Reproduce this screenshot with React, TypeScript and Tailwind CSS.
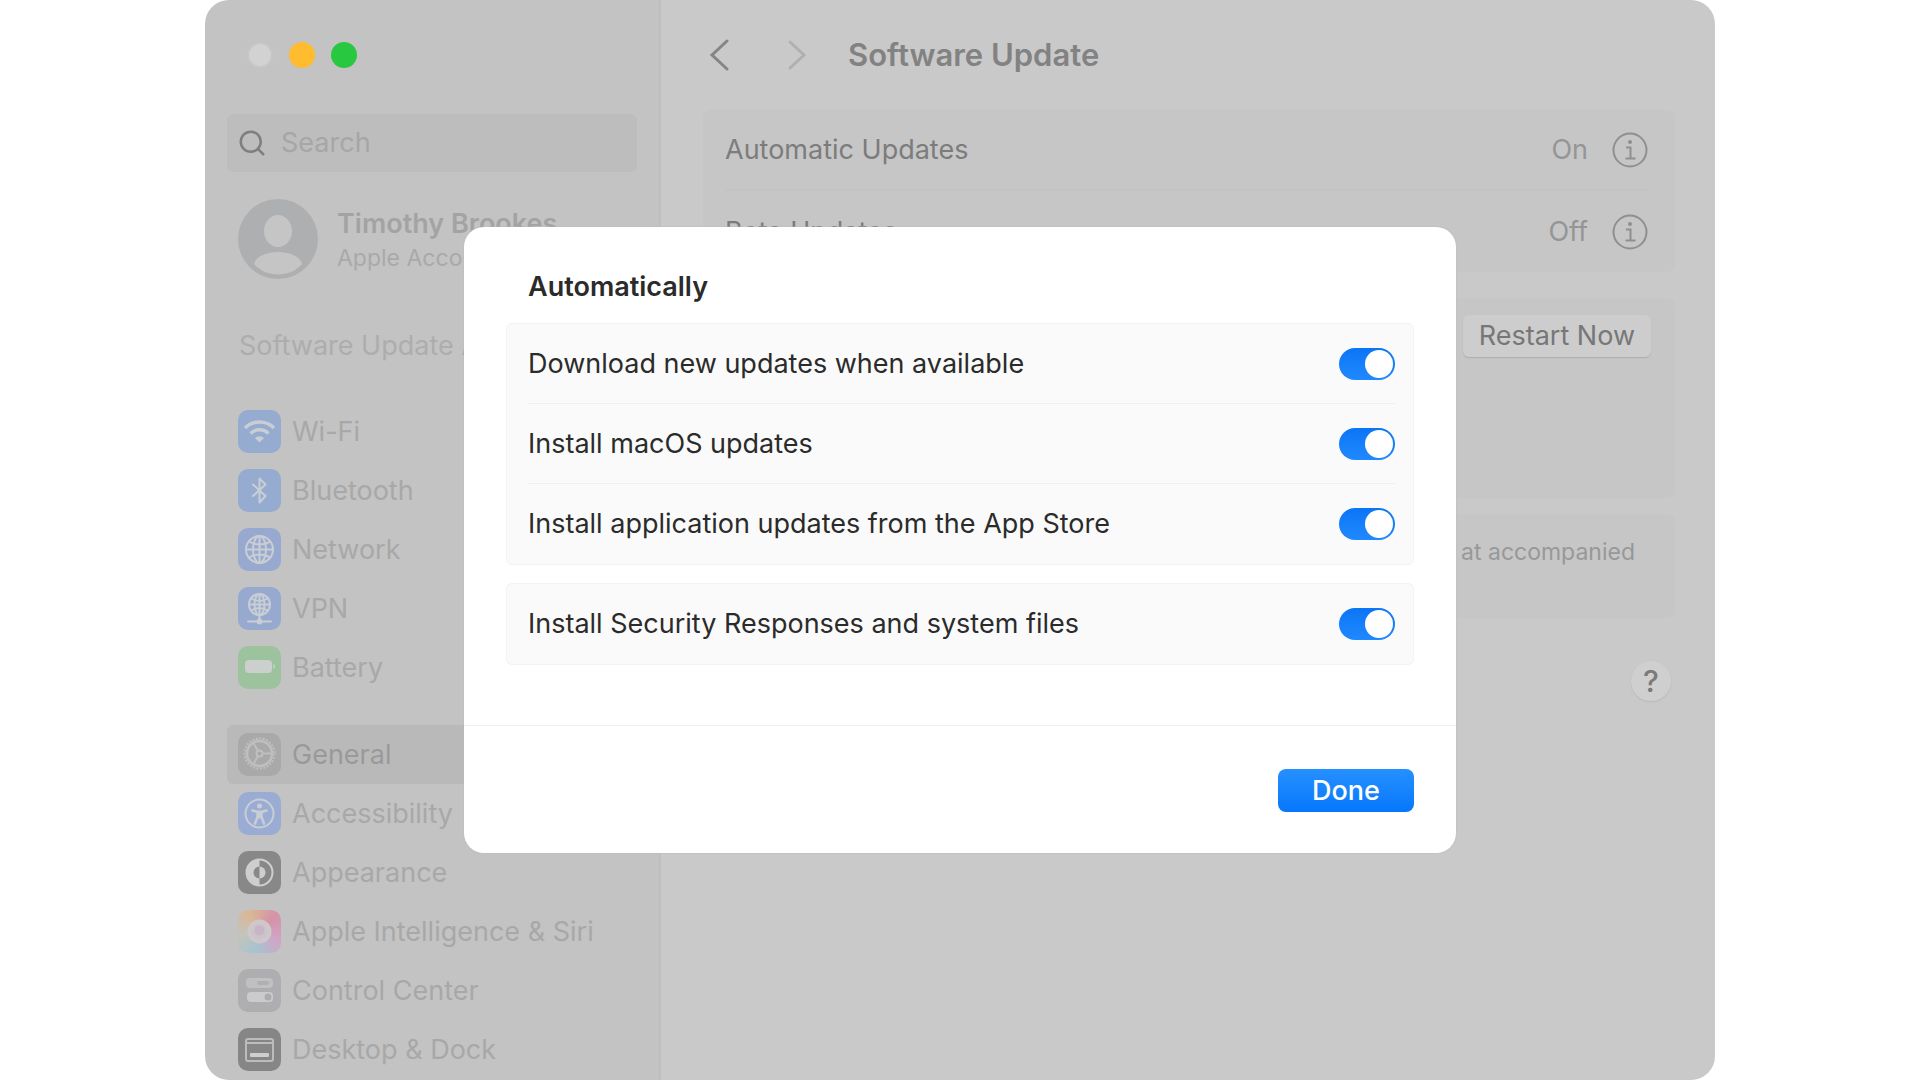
import { useId, useState } from "react";
import type { ReactNode } from "react";
import { Search } from "lucide-react";

type NavItem = { label: string; tile: string; icon: ReactNode };

const line = {
  fill: "none",
  stroke: "#c9ced4",
  strokeWidth: 2,
  strokeLinecap: "round" as const,
  strokeLinejoin: "round" as const,
};

const WifiIcon = (
  <svg viewBox="0 0 43 43" className="size-full">
    <g {...line} strokeWidth={3.5} strokeLinecap="butt">
      <path d="M7 18a20.500 20.500 0 0 1 29 0" />
      <path d="M12.500 23.500a12.800 12.800 0 0 1 18 0" />
    </g>
    <path d="M21.500 32.500l-4.500-4.500a6.400 6.400 0 0 1 9 0z" fill="#c9ced4" />
  </svg>
);

const BluetoothIcon = (
  <svg viewBox="0 0 43 43" className="size-full">
    <path {...line} d="M15 15.500l12.500 11.500-6 6.500v-24l6 6-12.500 11.500" />
  </svg>
);

const NetworkIcon = (
  <svg viewBox="0 0 43 43" className="size-full">
    <g {...line}>
      <circle cx="21.500" cy="21.500" r="13.500" />
      <ellipse cx="21.500" cy="21.500" rx="6.500" ry="13.500" />
      <path d="M21.500 8v27M8 21.500h27M11 13.500c6 4 15 4 21 0M11 29.500c6-4 15-4 21 0" />
    </g>
  </svg>
);

const VpnIcon = (
  <svg viewBox="0 0 43 43" className="size-full">
    <g {...line}>
      <circle cx="21.500" cy="17.500" r="10.500" />
      <ellipse cx="21.500" cy="17.500" rx="5" ry="10.500" />
      <path d="M21.500 7v21M11 17.500h21M13.500 11.500c5 3 11 3 16 0M13.500 23.500c5-3 11-3 16 0" />
      <path d="M21.500 28v5M10 34.500h8M25 34.500h8" />
    </g>
    <circle cx="21.500" cy="34.500" r="3" fill="#c9ced4" />
  </svg>
);

const BatteryIcon = (
  <svg viewBox="0 0 43 43" className="size-full">
    <rect x="7" y="14" width="27" height="13" rx="4" fill="#ccd0cc" />
    <path d="M35.500 18v5c2-.5 2-4.500 0-5z" fill="#ccd0cc" />
  </svg>
);

const GeneralIcon = (
  <svg viewBox="0 0 43 43" className="size-full">
    <g fill="none" stroke="#bfbfbf" strokeWidth="2">
      <circle cx="21.500" cy="20.500" r="15" strokeDasharray="2 1.500" />
      <circle cx="21.500" cy="20.500" r="12.500" strokeWidth="2.500" />
      <circle cx="21.500" cy="20.500" r="3" />
      <path d="M24.500 20.500h9M20 18l-4.500-8M20 23l-4.500 8" />
    </g>
  </svg>
);

const AccessibilityIcon = (
  <svg viewBox="0 0 43 43" className="size-full">
    <circle cx="21.500" cy="21.500" r="14" {...line} />
    <circle cx="21.500" cy="14" r="2.500" fill="#c9ced4" />
    <path {...line} strokeWidth={2.5} d="M14.500 18.500l5 1.500v5l-2.500 6.500M28.500 18.500l-5 1.500v5l2.500 6.500" />
    <path d="M19.500 18.500h4v8h-4z" fill="#c9ced4" />
  </svg>
);

const AppearanceIcon = (
  <svg viewBox="0 0 43 43" className="size-full">
    <circle cx="21.500" cy="21.500" r="13" fill="none" stroke="#cecece" strokeWidth="2" />
    <path d="M21.500 8.500a13 13 0 0 0 0 26v-7a6 6 0 0 1 0-12z" fill="#cecece" />
    <path d="M21.500 15.500a6 6 0 0 1 0 12z" fill="#cecece" />
  </svg>
);

const SiriIcon = (
  <svg viewBox="0 0 43 43" className="size-full">
    <circle cx="21.500" cy="21.500" r="10" fill="#cdc3cb" stroke="#cfc8cb" strokeWidth="4" />
    <circle cx="21.500" cy="20.500" r="5" fill="#c8b6c6" />
  </svg>
);

const ControlCenterIcon = (
  <svg viewBox="0 0 43 43" className="size-full">
    <rect x="8" y="9" width="27" height="10" rx="4" fill="#c0c0c2" />
    <rect x="19" y="12" width="12" height="4" rx="2" fill="#b0b0b3" />
    <rect x="9" y="23" width="26" height="10" rx="4" fill="#cbcbcd" />
    <circle cx="30" cy="28" r="3.500" fill="#acacaf" />
  </svg>
);

const DockIcon = (
  <svg viewBox="0 0 43 43" className="size-full">
    <rect x="8" y="11" width="27" height="22" rx="2" fill="none" stroke="#bcbcbc" strokeWidth="2" />
    <path d="M9 15h25" stroke="#bcbcbc" strokeWidth="2" />
    <rect x="12" y="25" width="19" height="4" rx="1" fill="#cecece" />
  </svg>
);

const CONNECTIVITY: NavItem[] = [
  { label: "Wi-Fi", tile: "bg-[#96abd0]", icon: WifiIcon },
  { label: "Bluetooth", tile: "bg-[#96abd0]", icon: BluetoothIcon },
  { label: "Network", tile: "bg-[#98a9d0]", icon: NetworkIcon },
  { label: "VPN", tile: "bg-[#98a9d0]", icon: VpnIcon },
  { label: "Battery", tile: "bg-[#9cc39e]", icon: BatteryIcon },
];

const SYSTEM: NavItem[] = [
  { label: "General", tile: "bg-[#a9a9a9]", icon: GeneralIcon },
  { label: "Accessibility", tile: "bg-[#9aacd3]", icon: AccessibilityIcon },
  { label: "Appearance", tile: "bg-[#888888]", icon: AppearanceIcon },
  {
    label: "Apple Intelligence & Siri",
    tile: "bg-[conic-gradient(from_45deg,#d592a8,#d0a6c6,#a6c3cf,#c4c4bb,#d9b795,#d592a8)]",
    icon: SiriIcon,
  },
  { label: "Control Center", tile: "bg-[#aeaeb1]", icon: ControlCenterIcon },
  { label: "Desktop & Dock", tile: "bg-[#868686]", icon: DockIcon },
];

const UPDATE_OPTIONS = [
  "Download new updates when available",
  "Install macOS updates",
  "Install application updates from the App Store",
];

const SECURITY_OPTIONS = ["Install Security Responses and system files"];

function NavList({ items, selected }: { items: NavItem[]; selected?: string }) {
  return (
    <ul>
      {items.map((item) => (
        <li key={item.label}>
          <a
            href="#"
            className={`flex h-[59px] items-center gap-[11px] rounded-md px-[11px] ${
              item.label === selected ? "bg-[#b9b9b9] text-[#999999]" : "text-[#a8a8a8]"
            }`}
          >
            <span className={`size-[43px] shrink-0 overflow-hidden rounded-[10px] ${item.tile}`}>{item.icon}</span>
            <span className="whitespace-nowrap">{item.label}</span>
          </a>
        </li>
      ))}
    </ul>
  );
}

function Sidebar() {
  return (
    <aside className="w-[456px] shrink-0 border-r-2 border-[#bfbfbf] bg-[#c3c3c3] px-[22px] text-[27px] leading-8">
      <div className="flex h-[114px] items-start gap-4 pt-[42px] pl-5">
        <button aria-label="Close" className="size-[26px] rounded-full border-2 border-[#c6c6c6] bg-[#d2d2d2]" />
        <button aria-label="Minimize" className="size-[26px] rounded-full bg-[#febc2e]" />
        <button aria-label="Zoom" className="size-[26px] rounded-full bg-[#28c840]" />
      </div>

      <label className="flex h-[58px] items-center gap-[14px] rounded-md bg-[#bdbdbd] px-[10px]">
        <Search className="size-[30px] shrink-0 text-[#7f7f7f]" strokeWidth={2} />
        <input
          type="search"
          aria-label="Search"
          placeholder="Search"
          className="w-full bg-transparent outline-none placeholder:text-[#a6a6a6]"
        />
      </label>

      <a href="#" className="mt-[27px] flex items-center gap-[19px] px-[11px]">
        <svg viewBox="0 0 80 80" className="size-20 shrink-0">
          <circle cx="40" cy="40" r="40" fill="#aeafb1" />
          <ellipse cx="40" cy="32" rx="14" ry="16" fill="#c5c5c6" />
          <path d="M16 65c4-16 44-16 48 0-12 14-36 14-48 0z" fill="#c5c5c6" />
        </svg>
        <span className="pt-1 leading-[34px] whitespace-nowrap">
          <span className="block font-semibold text-[#a3a3a3]">Timothy Brookes</span>
          <span className="block text-[23px] text-[#a9a9a9]">Apple Account</span>
        </span>
      </a>

      <a href="#" className="mt-[51px] block px-3 whitespace-nowrap text-[#adadad]">
        Software Update Available
      </a>

      <nav className="mt-10 flex flex-col gap-7">
        <NavList items={CONNECTIVITY} />
        <NavList items={SYSTEM} selected="General" />
      </nav>
    </aside>
  );
}

function InfoButton({ label }: { label: string }) {
  return (
    <button aria-label={label} className="size-9">
      <svg viewBox="0 0 36 36" className="size-full" fill="none" stroke="#8f8f8f">
        <circle cx="18" cy="18" r="16.500" strokeWidth="2" />
        <path d="M14 15.500h4.500v11M13.500 26.500h10" strokeWidth="2" />
        <circle cx="18" cy="10" r="2" fill="#8f8f8f" stroke="none" />
      </svg>
    </button>
  );
}

function StatusRow({ label, value }: { label: string; value: string }) {
  return (
    <div className="flex h-[81px] items-center">
      <span className="flex-1 text-[#7c7c7c]">{label}</span>
      <span className="mr-6 text-[#959595]">{value}</span>
      <InfoButton label={`${label} info`} />
    </div>
  );
}

function MainPane() {
  return (
    <main className="flex-1 bg-[#c9c9c9] pr-10 pl-[42px] text-[27px] leading-8">
      <header className="flex h-[110px] items-center">
        <button aria-label="Back" className="ml-[5px]">
          <svg viewBox="0 0 24 32" className="h-8 w-6" fill="none" stroke="#858585" strokeWidth="3" strokeLinecap="round">
            <path d="M19 2L4 16l15 14" />
          </svg>
        </button>
        <button aria-label="Forward" className="ml-[54px]">
          <svg viewBox="0 0 24 32" className="h-8 w-6" fill="none" stroke="#b0b0b0" strokeWidth="3" strokeLinecap="round">
            <path d="M4 3l14 13L4 29" />
          </svg>
        </button>
        <h1 className="ml-[38px] text-[31px] font-semibold text-[#828282]">Software Update</h1>
      </header>

      <section className="divide-y-2 divide-[#c3c3c3] rounded-lg bg-[#c6c6c6] pr-[27px] pl-[22px]">
        <StatusRow label="Automatic Updates" value="On" />
        <StatusRow label="Beta Updates" value="Off" />
      </section>

      <section className="mt-[26px] flex h-[200px] items-start justify-end rounded-lg bg-[#c6c6c6] pt-[17px] pr-6">
        <button className="h-[42px] rounded-md bg-[#cdcdcd] px-4 text-[#777777] shadow-[0_1px_1px_#adadad]">
          Restart Now
        </button>
      </section>

      <section className="mt-4 flex h-[104px] items-start justify-end rounded-lg bg-[#c6c6c6] pt-[22px] pr-10">
        <p className="text-[23px] text-[#989898]">at accompanied</p>
      </section>

      <div className="mt-[43px] flex justify-end">
        <button
          aria-label="Help"
          className="mr-1 size-10 rounded-full bg-[#cfcfcf] text-[30px] font-medium text-[#7a7a7a] shadow-[0_1px_2px_#b8b8b8]"
        >
          ?
        </button>
      </div>
    </main>
  );
}

function ToggleRow({ label }: { label: string }) {
  const id = useId();
  const [on, setOn] = useState(true);

  return (
    <div className="flex h-20 items-center justify-between">
      <label htmlFor={id}>{label}</label>
      <input
        id={id}
        type="checkbox"
        role="switch"
        checked={on}
        onChange={(e) => setOn(e.target.checked)}
        className="flex h-8 w-14 appearance-none items-center rounded-full bg-[#d5d5d5] p-[2px] before:size-7 before:rounded-full before:bg-white checked:justify-end checked:bg-linear-to-b checked:from-[#0a75f5] checked:to-[#2089ff]"
      />
    </div>
  );
}

function OptionGroup({ options }: { options: string[] }) {
  return (
    <div className="divide-y divide-[#efefef] rounded-md border border-[#f3f3f3] bg-[#fafafa] pr-[18px] pl-[21px]">
      {options.map((label) => (
        <ToggleRow key={label} label={label} />
      ))}
    </div>
  );
}

function UpdatesDialog() {
  return (
    <div
      role="dialog"
      aria-labelledby="dialog-title"
      className="w-full max-w-[992px] rounded-[20px] bg-white text-[27px] leading-8 text-[#2b2b2b] shadow-[0_0_2px_#b8b8b8]"
    >
      <div className="px-[42px] pt-11 pb-[60px]">
        <h2 id="dialog-title" className="mb-5 px-[22px] font-semibold">
          Automatically
        </h2>
        <div className="flex flex-col gap-[18px]">
          <OptionGroup options={UPDATE_OPTIONS} />
          <OptionGroup options={SECURITY_OPTIONS} />
        </div>
      </div>
      <footer className="flex justify-end border-t border-[#efefef] px-[42px] pt-[43px] pb-[41px]">
        <button className="h-[43px] w-[136px] rounded-lg bg-linear-to-b from-[#2590ff] to-[#0577fb] font-medium text-white">
          Done
        </button>
      </footer>
    </div>
  );
}

export default function App() {
  return (
    <div className="flex min-h-screen bg-white px-[205px] font-['Inter','Liberation_Sans',sans-serif]">
      <div className="relative flex flex-1 overflow-hidden rounded-[24px]">
        <Sidebar />
        <MainPane />
        <div className="absolute inset-0 flex items-center justify-center">
          <UpdatesDialog />
        </div>
      </div>
    </div>
  );
}
